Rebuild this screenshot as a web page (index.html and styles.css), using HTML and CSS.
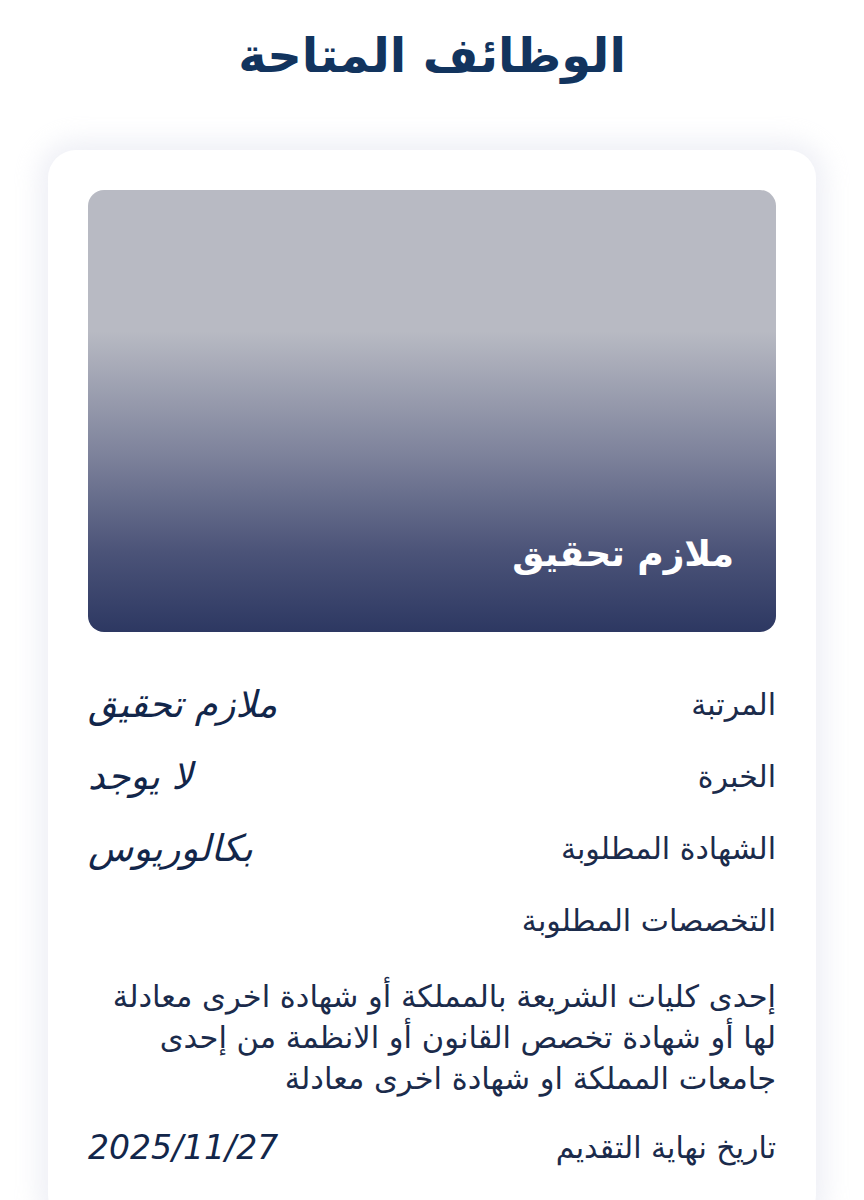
FILE: index.html
```html
<!DOCTYPE html>
<html lang="ar" dir="rtl">
<head>
<meta charset="utf-8">
<link rel="stylesheet" href="styles.css">
</head>
<body>
<main class="page">
  <h1 class="title">الوظائف المتاحة</h1>
  <section class="card">
    <div class="hero">
      <span class="hero-text">ملازم تحقيق</span>
    </div>
    <div class="rows">
      <div class="row">
        <span class="label">المرتبة</span>
        <span class="value">ملازم تحقيق</span>
      </div>
      <div class="row">
        <span class="label">الخبرة</span>
        <span class="value">لا يوجد</span>
      </div>
      <div class="row">
        <span class="label">الشهادة المطلوبة</span>
        <span class="value">بكالوريوس</span>
      </div>
      <div class="row">
        <span class="label">التخصصات المطلوبة</span>
      </div>
      <p class="desc">إحدى كليات الشريعة بالمملكة أو شهادة اخرى معادلة لها أو شهادة تخصص القانون أو الانظمة من إحدى جامعات المملكة او شهادة اخرى معادلة</p>
      <div class="row">
        <span class="label">تاريخ نهاية التقديم</span>
        <span class="value date">2025/11/27</span>
      </div>
    </div>
  </section>
</main>
</body>
</html>
```
FILE: styles.css
```css
* { box-sizing: border-box; }
html, body {
  margin: 0;
  background: #ffffff;
}
body {
  font-family: "DejaVu Sans", "Noto Sans", sans-serif;
  color: #1b2b4b;
}
.page {
  padding: 22px 48px 0;
}
.title {
  margin: 0;
  text-align: center;
  font-size: 48px;
  font-weight: 700;
  color: #12345e;
  line-height: 66px;
}
.card {
  margin-top: 62px;
  background: #fff;
  border-radius: 28px;
  padding: 40px 40px 40px;
  box-shadow: 0 0 24px 10px rgba(220, 222, 235, 0.45);
}
.hero {
  height: 442px;
  border-radius: 16px;
  background: linear-gradient(to bottom, #b8bac3 0%, #b8bac3 32%, #7d829b 60%, #4b5378 82%, #2d3862 100%);
  display: flex;
  align-items: flex-end;
  padding: 0 42px 58px;
}
.hero-text {
  color: #fff;
  font-size: 36px;
  font-weight: 700;
}
.rows {
  padding-top: 36px;
}
.row {
  display: flex;
  justify-content: space-between;
  align-items: center;
  height: 72px;
}
.label {
  font-size: 30px;
  color: #1b2b4b;
}
.value {
  font-size: 37px;
  font-style: italic;
  color: #12264a;
}
.value.date {
  font-size: 33px;
}
.desc {
  margin: 20px 0 12px;
  font-size: 30.5px;
  line-height: 41px;
  color: #1b2b4b;
}
```
